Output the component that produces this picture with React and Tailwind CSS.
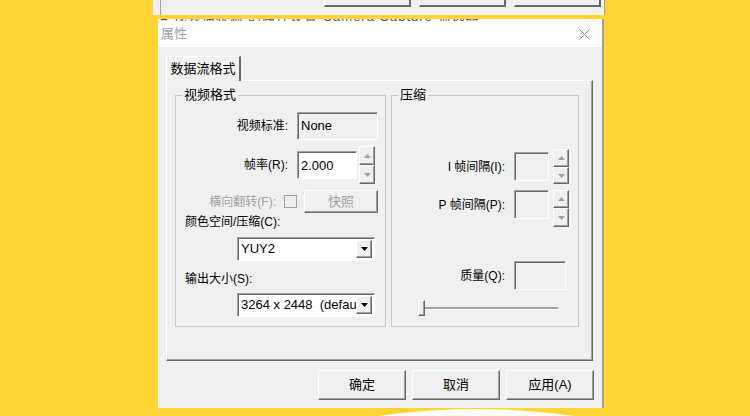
import React from "react";

const raised =
  "border border-t-white border-l-white border-b-[#696969] border-r-[#696969] shadow-[inset_-1px_-1px_0_#a0a0a0]";
const sunken =
  "border border-t-[#a0a0a0] border-l-[#a0a0a0] border-b-white border-r-white shadow-[inset_1px_1px_0_#696969]";

function Triangle({ dir = "up", color = "#a0a0a0" }) {
  return (
    <svg width="7" height="4" viewBox="0 0 7 4">
      {dir === "up" ? (
        <path d="M0 4 L3.5 0 L7 4 Z" fill={color} />
      ) : (
        <path d="M0 0 L7 0 L3.5 4 Z" fill={color} />
      )}
    </svg>
  );
}

function Spin({ upH, downH }) {
  return (
    <div className="flex flex-col w-[16px]">
      <div className={`${raised} bg-[#f0f0f0] flex items-center justify-center`} style={{ height: upH }}>
        <Triangle dir="up" />
      </div>
      <div className={`${raised} bg-[#f0f0f0] flex items-center justify-center`} style={{ height: downH }}>
        <Triangle dir="down" />
      </div>
    </div>
  );
}

function Combo({ value, h }) {
  return (
    <div className={`${sunken} bg-white w-[138px] flex items-stretch pl-[3px] pr-[2px] py-[2px]`} style={{ height: h }}>
      <div className="flex-1 overflow-hidden whitespace-pre leading-[18px] text-[13px] text-black">{value}</div>
      <div className={`${raised} bg-[#f0f0f0] w-[16px] flex items-center justify-center`}>
        <Triangle dir="down" color="#000" />
      </div>
    </div>
  );
}

function Button({ children, disabled, className = "" }) {
  return (
    <div
      className={`${raised} bg-[#f0f0f0] flex items-center justify-center text-[12px] ${
        disabled ? "text-[#a0a0a0]" : "text-black"
      } ${className}`}
    >
      {children}
    </div>
  );
}

function Legend({ children }) {
  return (
    <div className="mt-[-9px] ml-[6px] px-[2px] w-fit bg-[#f0f0f0] leading-[16px] text-[13px] text-black">
      {children}
    </div>
  );
}

export default function App() {
  return (
    <div className="w-[750px] h-[416px] bg-[#ffd433] overflow-hidden font-['Liberation_Sans','Noto_Sans_CJK_SC',sans-serif] text-[12px]">
      {/* window behind */}
      <div className="ml-[153px] w-[452px] h-[15px] bg-[#f0f0f0] flex">
        <div className="ml-[7px] flex-1 border-l border-r border-[#a0a0a0] flex justify-end gap-[8px] pr-[3px]">
          <div className="w-[87px] h-[7px] border-b-2 border-r-2 border-b-[#696969] border-r-[#696969] border-l border-l-white" />
          <div className="w-[87px] h-[7px] border-b-2 border-r-2 border-b-[#696969] border-r-[#696969] border-l border-l-white" />
          <div className="w-[87px] h-[7px] border-b-2 border-r-2 border-b-[#696969] border-r-[#696969] border-l border-l-white" />
        </div>
      </div>

      {/* dialog */}
      <div className="mt-[4px] ml-[158px] w-[446px] bg-[#f0f0f0] border-r-2 border-[#a0a0a0]">
        <div className="h-[2px] overflow-hidden bg-white flex items-end">
          <div className="mb-[-2px] pl-[2px] text-[13px] leading-[13px] text-[#555] whitespace-nowrap tracking-[1px]">
            ■ 视频捕获源 的属性设置 Camera Capture 筛选器
          </div>
        </div>
        <div className="h-[26px] bg-white flex items-center justify-between pl-[3px] pr-[12px]">
          <span className="text-[13px] text-[#a0a0a0]">属性</span>
          <svg width="11" height="11" viewBox="0 0 11 11">
            <path d="M0.5 0.5 L10.5 10.5 M10.5 0.5 L0.5 10.5" stroke="#8a8a8a" strokeWidth="1" />
          </svg>
        </div>

        <div className="pt-[9px] pl-[8px] pr-[8px]">
          {/* tab */}
          <div className="relative z-10 mb-[-1px] w-[75px] h-[25px] bg-[#f0f0f0] border-t border-l border-t-white border-l-white border-r-2 border-r-[#696969] flex items-center justify-center text-[13px] text-black">
            数据流格式
          </div>
          {/* panel */}
          <div className="h-[281px] w-[427px] border border-t-white border-l-white border-b-[#696969] border-r-[#696969] shadow-[inset_-1px_-1px_0_#a0a0a0] pt-[14px] pl-[8px] flex gap-[5px]">
            {/* left group */}
            <div className="w-[211px] h-[232px] border border-[#c8c8c8] flex flex-col">
              <Legend>视频格式</Legend>
              <div className="mt-[9px] h-[28px] flex items-center">
                <div className="w-[112px] text-right text-[12px] text-black">视频标准:</div>
                <div className={`ml-[9px] w-[81px] h-[28px] ${sunken} bg-[#f0f0f0] pl-[3px] pt-[3px] text-[13px] text-black`}>
                  None
                </div>
              </div>
              <div className="mt-[6px] h-[38px] flex items-center">
                <div className="w-[112px] text-right text-black">帧率(R):</div>
                <div className={`ml-[9px] w-[60px] h-[28px] ${sunken} bg-white pl-[3px] pt-[4px] text-[13px] text-black`}>
                  2.000
                </div>
                <div className="ml-[2px]">
                  <Spin upH={19} downH={19} />
                </div>
              </div>
              <div className="mt-[6px] h-[23px] flex items-center">
                <div className="w-[100px] text-right text-[#a0a0a0]">横向翻转(F):</div>
                <div className="ml-[8px] w-[13px] h-[13px] border border-[#a0a0a0] bg-[#f0f0f0]" />
                <Button disabled className="ml-[7px] w-[74px] h-[23px] text-[13px]">
                  快照
                </Button>
              </div>
              <div className="mt-[1px] ml-[9px] leading-[16px] text-black">颜色空间/压缩(C):</div>
              <div className="mt-[7px] ml-[61px]">
                <Combo value="YUY2" h={24} />
              </div>
              <div className="mt-[10px] ml-[9px] leading-[16px] text-black">输出大小(S):</div>
              <div className="mt-[6px] ml-[61px]">
                <Combo value="3264 x 2448  (default)" h={24} />
              </div>
            </div>

            {/* right group */}
            <div className="w-[188px] h-[232px] border border-[#c8c8c8] flex flex-col">
              <Legend>压缩</Legend>
              <div className="mt-[46px] h-[35px] flex items-center">
                <div className="w-[113px] text-right text-black">I 帧间隔(I):</div>
                <div className={`ml-[9px] w-[35px] h-[29px] ${sunken} bg-[#f0f0f0]`} />
                <div className="ml-[4px]">
                  <Spin upH={18} downH={17} />
                </div>
              </div>
              <div className="mt-[6px] h-[37px] flex items-start">
                <div className="w-[113px] h-[29px] flex items-center justify-end text-black">P 帧间隔(P):</div>
                <div className={`ml-[9px] w-[35px] h-[29px] ${sunken} bg-[#f0f0f0]`} />
                <div className="ml-[4px]">
                  <Spin upH={18} downH={19} />
                </div>
              </div>
              <div className="mt-[34px] h-[29px] flex items-center">
                <div className="w-[113px] text-right text-black">质量(Q):</div>
                <div className={`ml-[9px] w-[52px] h-[29px] ${sunken} bg-[#f0f0f0]`} />
              </div>
              <div className="mt-[10px] h-[16px] ml-[26px] flex items-center">
                <div className={`${raised} bg-[#f0f0f0] w-[7px] h-[16px]`} />
                <div className="w-[133px] h-[3px] border-t-2 border-t-[#a0a0a0] border-b border-b-white" />
              </div>
            </div>
          </div>

          {/* buttons */}
          <div className="mt-[9px] pb-[8px] flex justify-end gap-[6px]">
            <Button className="w-[88px] h-[30px] text-[13px]">确定</Button>
            <Button className="w-[88px] h-[30px] text-[13px]">取消</Button>
            <Button className="w-[88px] h-[30px] text-[13px]">应用(A)</Button>
          </div>
        </div>
      </div>

      <svg width="750" height="10" viewBox="0 0 750 10" className="block">
        <ellipse cx="476" cy="61" rx="207" ry="60" fill="#ffffff" />
      </svg>
    </div>
  );
}
